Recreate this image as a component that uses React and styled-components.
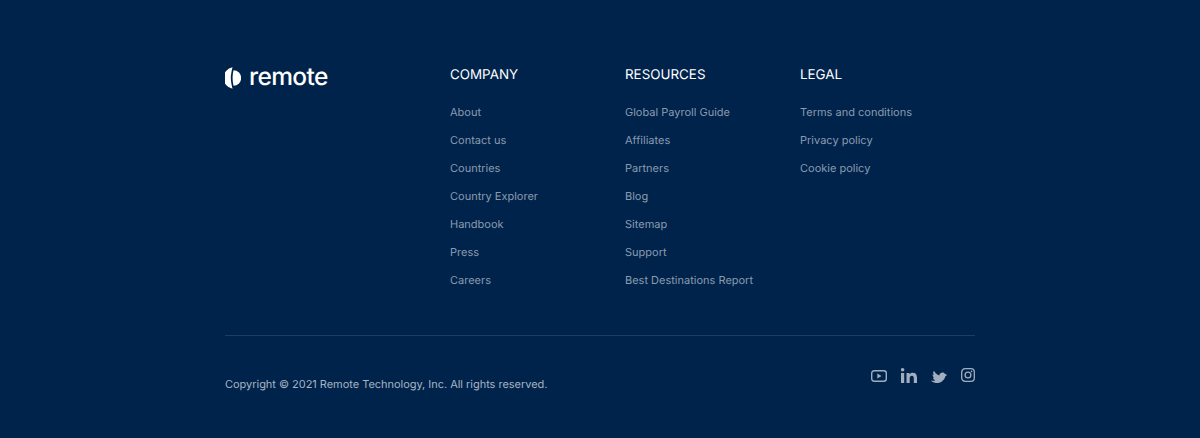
import React from 'react';
import styled, { createGlobalStyle } from 'styled-components';

const GlobalStyle = createGlobalStyle`
  html, body { margin: 0; padding: 0; background: #00234b; }
`;

const Footer = styled.footer`
  height: 438px;
  box-sizing: border-box;
  background: #00234b;
  padding-top: 64px;
  font-family: 'Inter', sans-serif;
  text-rendering: geometricPrecision;
`;

const Inner = styled.div`
  width: 750px;
  margin: 0 auto;
`;

const Top = styled.div`
  display: flex;
  height: 271px;
  border-bottom: 1px solid #1d3e63;
`;

const LogoBox = styled.div`
  width: 225px;
  display: flex;
  align-items: flex-start;
  gap: 8px;
  padding-top: 2px;
  color: #fff;
`;

const LogoText = styled.span`
  font-size: 24.5px;
  font-weight: 500;
  line-height: 21px;
  letter-spacing: -0.6px;
`;

const Column = styled.div`
  width: 175px;
`;

const Heading = styled.h4`
  margin: 0 0 11px;
  font-size: 13.4px;
  line-height: 23px;
  font-weight: 400;
  color: #fff;
`;

const LinkList = styled.ul`
  list-style: none;
  margin: 0;
  padding: 0;
`;

const LinkItem = styled.li`
  font-size: 11px;
  line-height: 28px;
  color: #8a9bb0;
`;

const Bottom = styled.div`
  display: flex;
  justify-content: space-between;
  align-items: flex-start;
  padding-top: 31px;
`;

const Copyright = styled.p`
  margin: 7px 0 0;
  font-size: 11px;
  line-height: 20px;
  letter-spacing: -0.03px;
  color: #a6b4c4;
`;

const Socials = styled.div`
  display: flex;
  align-items: center;
  gap: 14px;
  height: 16px;
  color: #a0aebf;
`;

const columns = [
  { title: 'COMPANY', links: ['About', 'Contact us', 'Countries', 'Country Explorer', 'Handbook', 'Press', 'Careers'] },
  { title: 'RESOURCES', links: ['Global Payroll Guide', 'Affiliates', 'Partners', 'Blog', 'Sitemap', 'Support', 'Best Destinations Report'] },
  { title: 'LEGAL', links: ['Terms and conditions', 'Privacy policy', 'Cookie policy'] },
];

const LogoMark = () => (
  <svg width="16" height="24" viewBox="0 0 16 24" fill="#fff">
    <path d="M7.500 1.200A11 11 0 0 0 7.500 22.800C6.500 18.500 5.800 15 5.800 12S6.500 5.500 7.500 1.200Z" />
    <path d="M8.500 4.300A7.700 7.700 0 0 1 8.500 19.700C7.900 17 7.600 14.500 7.600 12S7.900 7 8.500 4.300Z" />
  </svg>
);

const App = () => (
  <>
    <GlobalStyle />
    <Footer>
      <Inner>
        <Top>
          <LogoBox>
            <LogoMark />
            <LogoText>remote</LogoText>
          </LogoBox>
          {columns.map((col) => (
            <Column key={col.title}>
              <Heading>{col.title}</Heading>
              <LinkList>
                {col.links.map((l) => <LinkItem key={l}>{l}</LinkItem>)}
              </LinkList>
            </Column>
          ))}
        </Top>
        <Bottom>
          <Copyright>Copyright © 2021 Remote Technology, Inc. All rights reserved.</Copyright>
          <Socials>
            <svg width="16" height="12" viewBox="0 0 16 12" fill="none" stroke="currentColor" strokeWidth="1.4" style={{ marginTop: 2 }}>
              <rect x="0.7" y="0.7" width="14.6" height="10.6" rx="2.5" />
              <path d="M6.300 3.400v5.200L10.600 6z" fill="currentColor" stroke="none" />
            </svg>
            <svg width="16" height="15" viewBox="0 0 16 15" fill="currentColor">
              <rect x="0" y="5" width="3.2" height="10" />
              <circle cx="1.600" cy="1.800" r="1.800" />
              <path d="M5.500 5h3v1.400C9.100 5.400 10.300 4.800 11.700 4.800c3.100 0 4.300 1.900 4.300 5V15h-3.200v-4.700c0-1.500-.5-2.600-1.900-2.600-1.500 0-2.200 1.100-2.200 2.600V15H5.500z" />
            </svg>
            <svg width="16" height="13" viewBox="0 0 16 13" fill="currentColor" style={{ marginTop: 5 }}>
              <path transform="rotate(14 8 6.500) translate(.6 .7) scale(.92)" d="M16 1.600c-.6.300-1.200.4-1.900.5.700-.4 1.200-1 1.400-1.800-.6.400-1.300.6-2.100.8C12.800.400 12 0 11.100 0 9.300 0 7.800 1.500 7.800 3.300c0 .3 0 .5.100.8C5.200 3.900 2.800 2.600 1.100.6.800 1.100.6 1.700.6 2.300c0 1.100.6 2.100 1.500 2.700-.5 0-1-.2-1.500-.4 0 1.600 1.100 2.900 2.600 3.200-.5.100-1 .1-1.500 0 .4 1.300 1.600 2.300 3.100 2.300C3.700 11.200 1.900 11.800 0 11.600 1.500 12.500 3.200 13 5 13c6 0 9.400-5 9.400-9.400v-.4c.6-.4 1.200-1 1.600-1.600z" />
            </svg>
            <svg width="14" height="14" viewBox="0 0 14 14" fill="none" stroke="currentColor" strokeWidth="1.300">
              <rect x="0.700" y="0.700" width="12.600" height="12.600" rx="3.400" />
              <circle cx="7" cy="7" r="2.900" />
              <circle cx="10.600" cy="3.400" r="0.800" fill="currentColor" stroke="none" />
            </svg>
          </Socials>
        </Bottom>
      </Inner>
    </Footer>
  </>
);

export default App;
